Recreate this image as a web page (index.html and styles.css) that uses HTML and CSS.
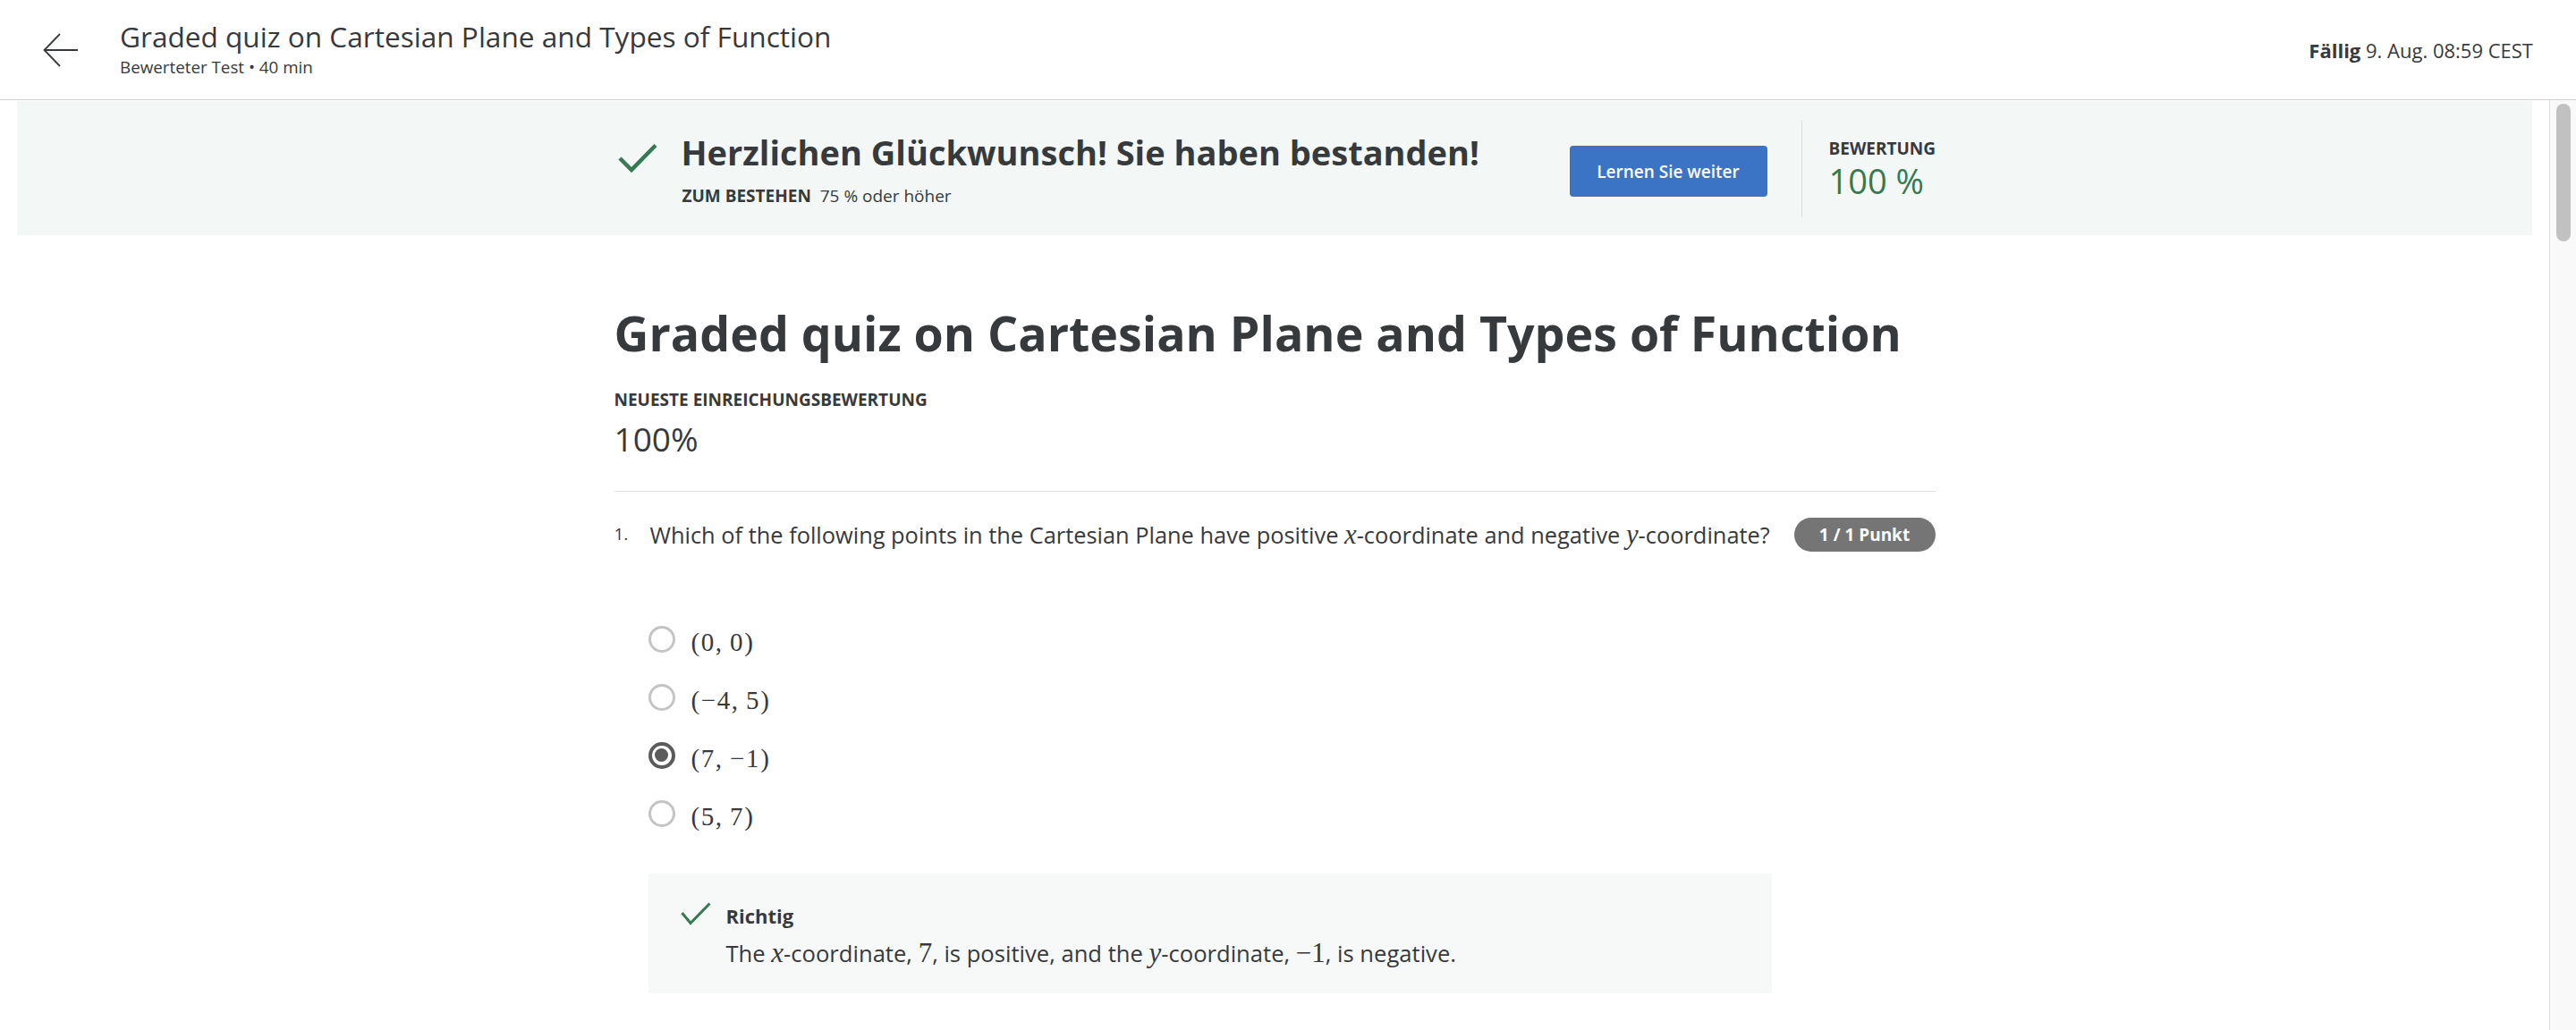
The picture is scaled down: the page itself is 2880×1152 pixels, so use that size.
FILE: index.html
```html
<!DOCTYPE html>
<html lang="de">
<head>
<meta charset="utf-8">
<title>Graded quiz on Cartesian Plane and Types of Function</title>
<link rel="stylesheet" href="styles.css">
</head>
<body>
<div class="app">
  <header class="topbar">
    <div class="back" aria-label="Zurück">
      <svg width="40" height="38" viewBox="0 0 40 38"><path d="M19 1 L1.5 19 L19 37 M1.5 19 H39" fill="none" stroke="#373a3c" stroke-width="1.8"/></svg>
    </div>
    <div class="titles">
      <div class="t1">Graded quiz on Cartesian Plane and Types of Function</div>
      <div class="t2">Bewerteter Test • 40 min</div>
    </div>
    <div class="due"><b>Fällig</b> 9. Aug. 08:59 CEST</div>
  </header>
  <div class="body">
    <main class="scroll">
      <section class="banner">
        <div class="banner-inner">
          <svg class="bcheck" width="50" height="34" viewBox="0 0 50 34"><path d="M6 17 L19 30 L46 2.5" fill="none" stroke="#357a52" stroke-width="4.5"/></svg>
          <div class="btext">
            <div class="bhead">Herzlichen Glückwunsch! Sie haben bestanden!</div>
            <div class="bsub"><b>ZUM BESTEHEN</b>&nbsp; 75 % oder höher</div>
          </div>
          <div class="btn">Lernen Sie weiter</div>
          <div class="vdiv"></div>
          <div class="score">
            <div class="slabel">BEWERTUNG</div>
            <div class="svalue">100 %</div>
          </div>
        </div>
      </section>
      <div class="content">
        <h1 class="qtitle">Graded quiz on Cartesian Plane and Types of Function</h1>
        <div class="label">NEUESTE EINREICHUNGSBEWERTUNG</div>
        <div class="grade">100%</div>
        <div class="sep"></div>
        <div class="qrow">
          <div class="qnum">1.</div>
          <div class="qtext">Which of the following points in the Cartesian Plane have positive <span class="m mi">x</span>-coordinate and negative <span class="m mi">y</span>-coordinate?</div>
          <div class="badge">1 / 1 Punkt</div>
        </div>
        <div class="options">
          <div class="opt"><span class="radio"></span><span class="otext">(0,&#8201;0)</span></div>
          <div class="opt"><span class="radio"></span><span class="otext">(−4,&#8201;5)</span></div>
          <div class="opt"><span class="radio on"></span><span class="otext">(7,&#8201;−1)</span></div>
          <div class="opt"><span class="radio"></span><span class="otext">(5,&#8201;7)</span></div>
        </div>
        <div class="feedback">
          <svg class="fcheck" width="34" height="26" viewBox="0 0 34 26"><path d="M1.5 12 L11 23.5 L32.5 1.5" fill="none" stroke="#357a52" stroke-width="3"/></svg>
          <div class="ftext">
            <div class="fhead">Richtig</div>
            <div class="fbody">The <span class="m mi">x</span>-coordinate, <span class="m">7</span>, is positive, and the <span class="m mi">y</span>-coordinate, <span class="m">−1</span>, is negative.</div>
          </div>
        </div>
      </div>
    </main>
    <div class="scrollbar"><div class="thumb"></div></div>
  </div>
</div>
</body>
</html>
```
FILE: styles.css
```css
* { box-sizing: border-box; }
html, body { margin: 0; padding: 0; }
body {
  font-family: "Open Sans", "Noto Sans", sans-serif;
  color: #373a3c;
  background: #fff;
  width: 2880px;
  height: 1152px;
  overflow: hidden;
}
.app { display: flex; flex-direction: column; height: 1152px; }

.topbar {
  height: 112px;
  flex-shrink: 0;
  border-bottom: 1px solid #cfcfcf;
  display: flex;
  align-items: center;
  padding: 0 48px;
}
.back { width: 40px; height: 38px; display: flex; margin-right: 46px; }
.titles { flex: 1; margin-bottom: 3px; }
.t1 { font-size: 31.6px; line-height: 40px; }
.t2 { font-size: 18.8px; line-height: 26px; margin-top: 1px; }
.due { font-size: 22px; line-height: 30px; }
.due b { font-weight: 700; }

.body { flex: 1; display: flex; min-height: 0; }
.scroll { flex: 1; min-width: 0; overflow: hidden; }
.scrollbar {
  width: 30px;
  flex-shrink: 0;
  background: #f9f9f9;
  border-left: 1px solid #e4e4e4;
  padding: 4px 0 0 7px;
}
.thumb { width: 16px; height: 154px; border-radius: 8px; background: #c1c1c1; }

.banner {
  margin: 1px 19px 0;
  height: 150px;
  background: #f3f8f6;
}
.banner-inner {
  width: 1477px;
  margin: 0 auto;
  display: flex;
  align-items: flex-start;
  padding-top: 22px;
}
.bcheck { flex-shrink: 0; margin-top: 25px; margin-right: 25px; }
.btext { flex: 1; margin-top: 11px; }
.bhead { font-size: 38px; line-height: 48px; font-weight: 700; }
.bsub { font-size: 19px; line-height: 24px; margin-top: 13px; padding-left: 1px; }
.bsub b { font-weight: 700; }
.btn {
  margin-top: 28px;
  width: 221px;
  height: 57px;
  border-radius: 4px;
  background: #3b73c5;
  color: #fff;
  font-size: 19px;
  font-weight: 600;
  display: flex;
  align-items: center;
  justify-content: center;
  flex-shrink: 0;
}
.vdiv { width: 1px; height: 107px; background: #dcdcdc; margin-left: 38px; flex-shrink: 0; }
.score { width: 149px; padding-left: 30px; margin-top: 18.6px; flex-shrink: 0; }
.slabel { font-size: 19px; line-height: 24px; font-weight: 700; }
.svalue { font-size: 38px; line-height: 46px; color: #357a52; margin-top: 1px; }

.content { width: 1477px; margin: 0 auto; }
.qtitle { margin: 74px 0 0; font-size: 53.7px; line-height: 72px; font-weight: 700; }
.label { margin-top: 25.6px; font-size: 19px; line-height: 24px; font-weight: 700; }
.grade { margin-top: 8px; font-size: 37px; line-height: 48px; }
.sep { margin-top: 34.4px; border-top: 1px solid #e2e2e2; }

.qrow { margin-top: 29px; display: flex; align-items: center; min-height: 38px; }
.qnum { width: 40px; flex-shrink: 0; align-self: flex-start; margin-top: 5.6px; font-size: 19px; line-height: 24px; }
.qtext { flex: 1; font-size: 25.4px; line-height: 34px; }
.badge {
  flex-shrink: 0;
  width: 158px;
  height: 38px;
  border-radius: 19px;
  background: #757575;
  color: #fff;
  font-size: 19px;
  font-weight: 700;
  display: flex;
  align-items: center;
  justify-content: center;
}

.m { font-family: "Liberation Serif", "Times New Roman", serif; font-size: 1.21em; line-height: 1; }
.mi { font-style: italic; }

.options { margin-top: 65.5px; padding-left: 38px; }
.opt { height: 65px; display: flex; align-items: center; }
.radio {
  width: 30px;
  height: 30px;
  border-radius: 50%;
  border: 3px solid #c4c4c4;
  margin-right: 18px;
  flex-shrink: 0;
  display: flex;
  align-items: center;
  justify-content: center;
}
.radio.on { border: 4px solid #5b5b5b; }
.radio.on::after { content: ""; width: 15px; height: 15px; border-radius: 50%; background: #5b5b5b; }
.otext { font-family: "Liberation Serif", "Times New Roman", serif; font-size: 29px; line-height: 32px; padding-top: 6px; letter-spacing: 1.6px; }

.feedback {
  margin: 34.5px 0 0 38px;
  width: 1256px;
  background: #f7f9f9;
  display: flex;
  align-items: flex-start;
  padding: 32px 0 26.7px 36px;
}
.fcheck { flex-shrink: 0; margin-right: 17px; }
.ftext { margin-top: 1.5px; }
.fhead { font-size: 22px; line-height: 28px; font-weight: 700; }
.fbody { margin-top: 11.8px; font-size: 25.6px; line-height: 34px; }
```
